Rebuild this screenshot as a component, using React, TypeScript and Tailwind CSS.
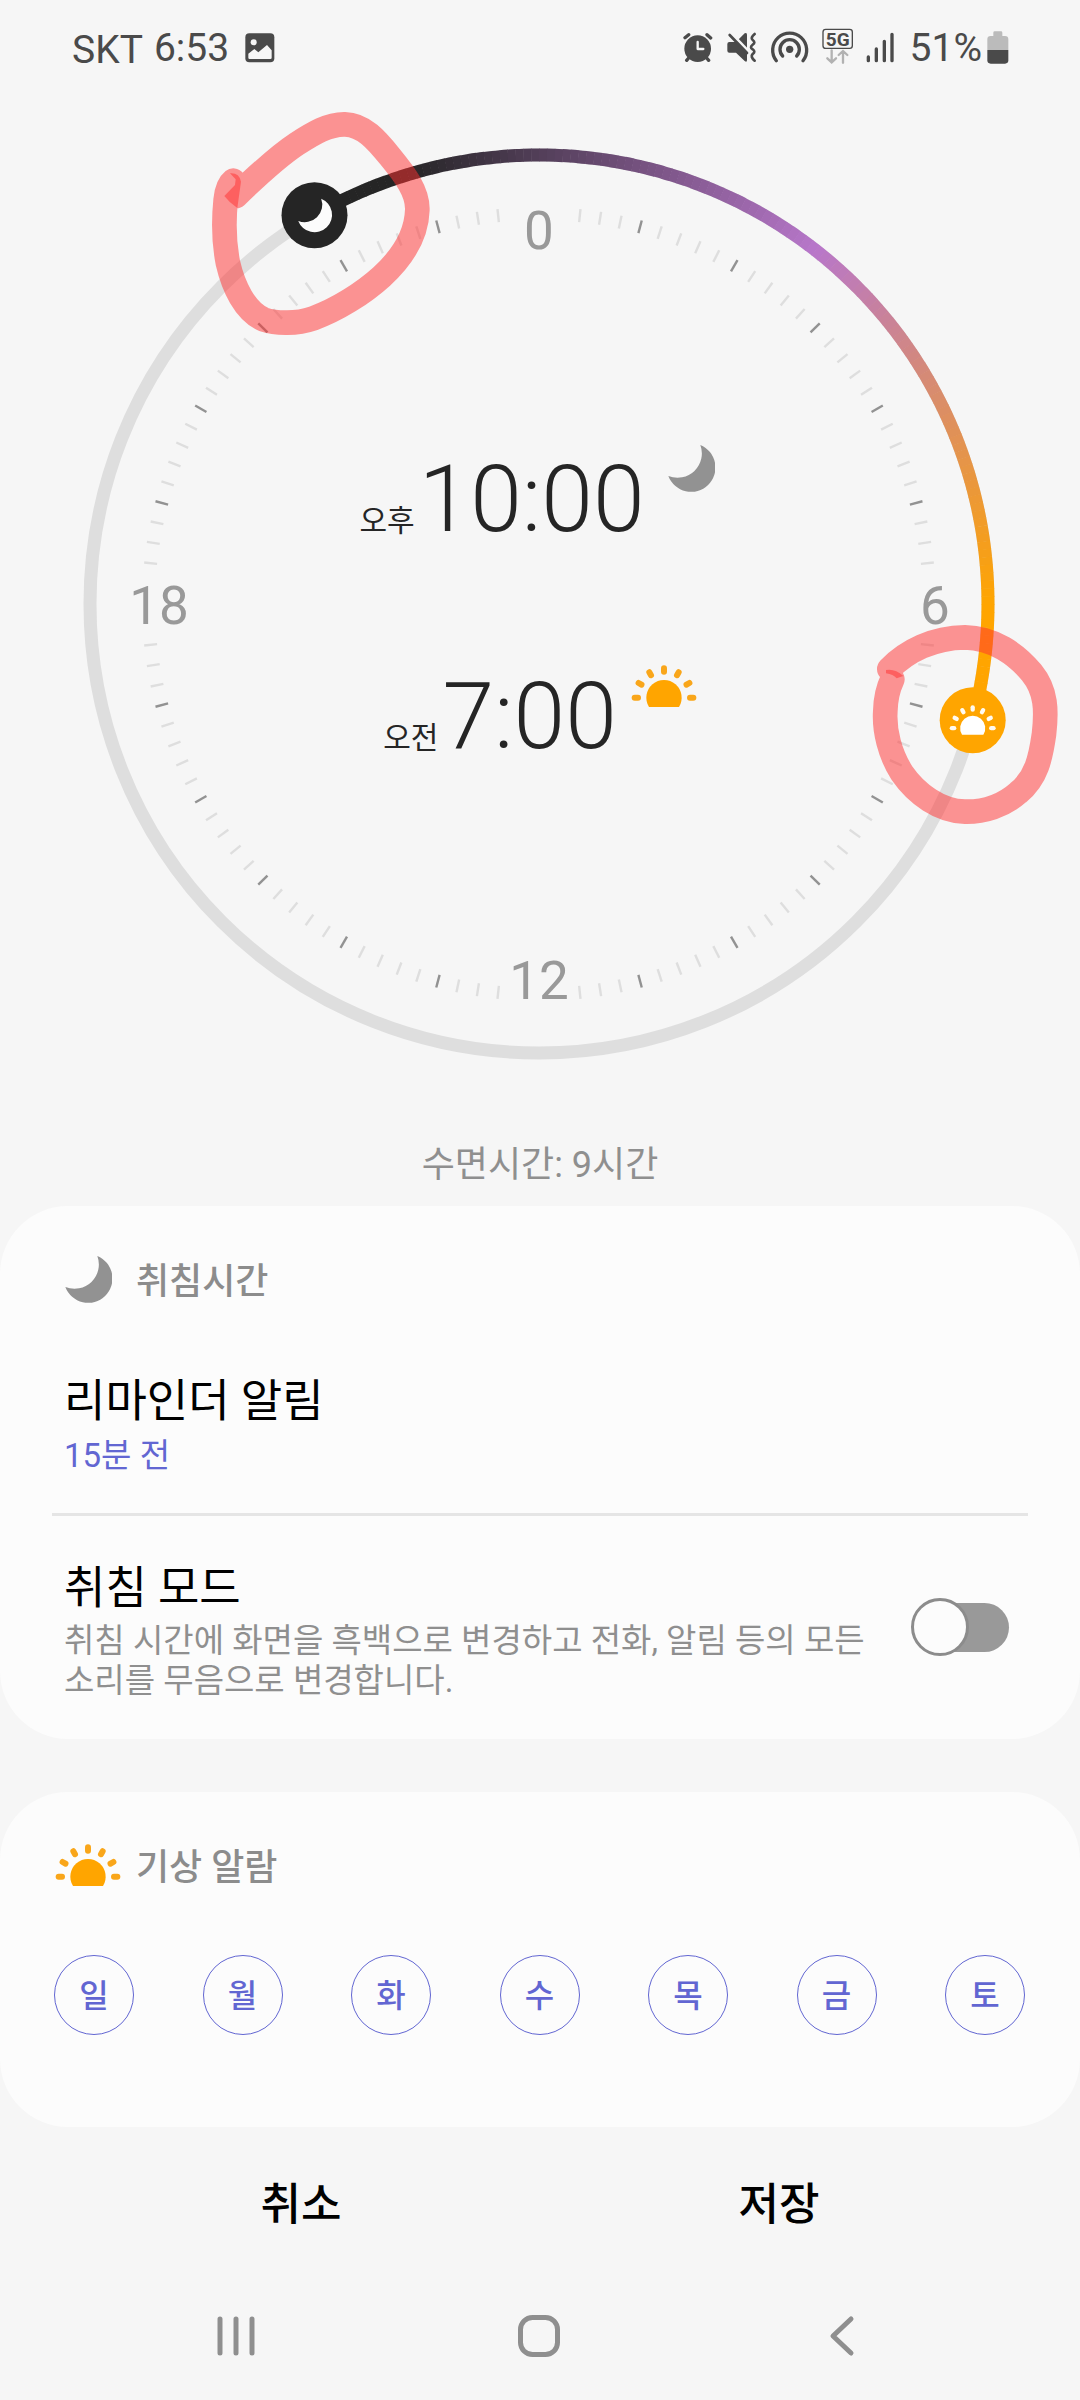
import type { ReactNode } from "react"

const RING_RADIUS = 449
const START_ANGLE = -30
const END_ANGLE = 105

const days = ["일", "월", "화", "수", "목", "금", "토"]

const hourLabels = [
  { text: "0", x: 0, y: -355 },
  { text: "6", x: 396, y: 20 },
  { text: "12", x: 0, y: 395 },
  { text: "18", x: -380, y: 20 },
]

const arcStops = [
  { angle: -30, color: [37, 37, 37] },
  { angle: -17, color: [37, 37, 37] },
  { angle: 38, color: [184, 119, 202] },
  { angle: 90, color: [255, 165, 0] },
  { angle: 105, color: [255, 165, 0] },
]

// 0 degrees is midnight at the top, going clockwise
function point(angle: number, radius: number) {
  const rad = (angle * Math.PI) / 180
  return { x: Math.sin(rad) * radius, y: -Math.cos(rad) * radius }
}

function arcColor(angle: number) {
  const i = Math.max(1, arcStops.findIndex((stop) => angle <= stop.angle))
  const from = arcStops[i - 1]
  const to = arcStops[i]
  const t = (angle - from.angle) / (to.angle - from.angle)
  return `rgb(${from.color.map((c, k) => Math.round(c + (to.color[k] - c) * t)).join(",")})`
}

function MoonShape({ fill }: { fill: string }) {
  return <path d="M28 -69A73 73 0 1 1 -68 24A73 73 0 0 0 28 -69Z" fill={fill} />
}

function SunShape({ body, rays }: { body: string; rays: string }) {
  return (
    <>
      <path d="M-45 28A53 53 0 1 1 45 28Z" fill={body} />
      {[-90, -60, -30, 0, 30, 60, 90].map((angle) => (
        <line
          key={angle}
          y1={-78}
          y2={-88}
          stroke={rays}
          strokeWidth={18}
          strokeLinecap="round"
          transform={`rotate(${angle})`}
        />
      ))}
    </>
  )
}

function MoonIcon({ className = "" }: { className?: string }) {
  return (
    <svg viewBox="-72 -72 144 144" className={`w-12 h-12 ${className}`} aria-hidden="true">
      <MoonShape fill="#929292" />
    </svg>
  )
}

function SunIcon({ className = "" }: { className?: string }) {
  return (
    <svg viewBox="-99 -98 198 129" className={`w-[66px] h-[43px] ${className}`} aria-hidden="true">
      <SunShape body="#ffa500" rays="#f9a61a" />
    </svg>
  )
}

function StatusBar() {
  return (
    <header className="flex items-center h-24 pl-[72px] pr-[71px] pb-1 text-[39px] text-[#4a4a4a]">
      <span className="pt-2">SKT</span>
      <span className="ml-[11px] pt-1">6:53</span>
      <svg viewBox="0 0 90 90" className="ml-4 w-[30px] h-[30px] mt-1" aria-hidden="true">
        <rect x="1" y="1" width="87" height="87" rx="12" fill="#4a4a4a" />
        <circle cx="26" cy="28" r="9" fill="#f6f6f6" />
        <path d="M10 62L28 48L40 58L66 36L80 52V74Q80 78 76 78H14Q10 78 10 74Z" fill="#f6f6f6" />
      </svg>

      <div className="flex items-center gap-[13px] ml-auto">
        <svg viewBox="62 54 90 108" className="w-[30px] h-9" aria-hidden="true">
          <g stroke="#4a4a4a" strokeWidth="10" strokeLinecap="round" fill="none">
            <path d="M68 83L79 74M134 74L145 84M79 144L73 151M133 144L139 151" />
          </g>
          <circle cx="106" cy="116" r="40" fill="#4a4a4a" />
          <path d="M106 96V117H123" stroke="#f6f6f6" strokeWidth="7" strokeLinecap="round" strokeLinejoin="round" fill="none" />
        </svg>
        <svg viewBox="196 54 93 108" className="w-[31px] h-9" aria-hidden="true">
          <path d="M206 96H226L252 70Q259 66 259 74V150Q259 158 252 153L226 128H206Q200 128 200 122V102Q200 96 206 96Z" fill="#4a4a4a" />
          <path d="M206 64L266 127" stroke="#f6f6f6" strokeWidth="9" />
          <path d="M207 75L259 129" stroke="#4a4a4a" strokeWidth="8" strokeLinecap="round" />
          <path d="M282 72Q268 84 276 90Q286 98 276 104Q266 112 276 118Q286 126 276 132Q268 140 282 152" stroke="#4a4a4a" strokeWidth="8" strokeLinecap="round" fill="none" />
        </svg>
        <svg viewBox="327 54 117 108" className="w-[39px] h-9" aria-hidden="true">
          <circle cx="386" cy="118" r="11" fill="#4a4a4a" />
          <g stroke="#4a4a4a" strokeWidth="10" strokeLinecap="round" fill="none">
            <path d="M365 138A29 29 0 1 1 407 138" />
            <path d="M346 152A51 51 0 1 1 426 152" />
          </g>
        </svg>
        <svg viewBox="487 54 93 108" className="w-[31px] h-9" aria-hidden="true">
          <rect x="490" y="58" width="88" height="57" rx="8" fill="none" stroke="#4a4a4a" strokeWidth="4" />
          <text x="534" y="107" textAnchor="middle" fontSize="57" fontWeight="700" fill="#4a4a4a">
            5G
          </text>
          <path d="M516 121V156M503 145L516 157L529 145M550 158V124M537 135L550 123L563 135" stroke="#b2b2b2" strokeWidth="7" strokeLinecap="round" fill="none" />
        </svg>
        <svg viewBox="617 54 87 108" className="w-[29px] h-9" aria-hidden="true">
          <path d="M624 141V152M648 117V152M672 94V152M695 73V152" stroke="#4a4a4a" strokeWidth="10" strokeLinecap="round" />
        </svg>
        <span className="ml-[2px] pt-1">51%</span>
        <svg viewBox="980 54 66 108" className="-ml-2 w-[22px] h-9" aria-hidden="true">
          <path d="M981 120V88Q981 78 991 78H999V68Q999 64 1003 64H1022Q1026 64 1026 68V78H1034Q1044 78 1044 88V120Z" fill="#bbbbbb" />
          <path d="M981 120H1044V151Q1044 161 1034 161H991Q981 161 981 151Z" fill="#4a4a4a" />
        </svg>
      </div>
    </header>
  )
}

function DialFace() {
  const ticks = Array.from({ length: 120 }, (_, i) => i * 3).filter((angle) => {
    const rest = angle % 90
    return rest > 3 && rest < 87
  })
  const segments = Array.from({ length: END_ANGLE - START_ANGLE }, (_, i) => START_ANGLE + i)
  const bed = point(START_ANGLE, RING_RADIUS)
  const wake = point(END_ANGLE, RING_RADIUS)

  return (
    <svg viewBox="-539 -508 1080 978" className="[grid-area:1/1] w-full h-auto" aria-hidden="true">
      <circle r={RING_RADIUS} fill="none" stroke="#dedede" strokeWidth={13} />

      {segments.map((angle) => {
        const a = point(angle, RING_RADIUS)
        const b = point(Math.min(angle + 1.06, END_ANGLE), RING_RADIUS)
        return (
          <path
            key={angle}
            d={`M${a.x} ${a.y}A${RING_RADIUS} ${RING_RADIUS} 0 0 1 ${b.x} ${b.y}`}
            stroke={arcColor(angle + 0.5)}
            strokeWidth={13}
            fill="none"
          />
        )
      })}

      {ticks.map((angle) => (
        <line
          key={angle}
          y1={-397}
          y2={-384}
          stroke={angle % 15 === 0 ? "#929292" : "#dedede"}
          strokeWidth={2.4}
          transform={`rotate(${angle})`}
        />
      ))}

      {hourLabels.map((label) => (
        <text key={label.text} x={label.x} y={label.y} textAnchor="middle" fontSize={53} fill="#999999">
          {label.text}
        </text>
      ))}

      <g transform={`translate(${bed.x} ${bed.y})`}>
        <circle r={33} fill="#252525" />
        <g transform="scale(0.239)">
          <MoonShape fill="#fcfcfc" />
        </g>
      </g>
      <g transform={`translate(${wake.x} ${wake.y})`}>
        <circle r={33} fill="#ffa500" />
        <g transform="translate(0 8) scale(0.237)">
          <SunShape body="#ffffff" rays="#fffaf0" />
        </g>
      </g>

      {/* hand-drawn marker rings around both handles */}
      <g fill="none" stroke="#ff3232" strokeOpacity="0.51" strokeWidth="74" strokeLinecap="round" strokeLinejoin="round">
        <g transform="translate(-349 -514) scale(0.3333)">
          <path d="M138 318C190 268 255 205 320 162C370 130 415 102 465 103C520 104 560 150 600 200C645 255 684 305 682 360C680 430 640 500 575 560C520 610 440 660 370 685C320 702 260 702 220 688C165 663 130 590 114 520C100 450 101 390 107 330C110 300 120 280 130 272" />
          <path d="M103 318L135 285L137 268L120 250Q148 248 153 275L142 354Q118 338 103 318Z" stroke="none" fill="#ff3232" fillOpacity="0.51" />
        </g>
        <g transform="translate(311 -43) scale(0.3333)">
          <path d="M118 324C170 270 250 230 345 229C430 230 500 280 545 335C590 390 590 450 582 520C572 590 560 650 505 695C460 735 400 753 345 752C270 750 200 700 155 635C120 580 102 510 106 450C107 410 115 380 127 355" />
          <path d="M108 327Q135 322 160 345L140 352Q130 340 108 337Z" stroke="none" fill="#ff3232" fillOpacity="0.51" />
        </g>
      </g>
    </svg>
  )
}

function TimeRow({ period, time, children }: { period: string; time: string; children: ReactNode }) {
  return (
    <div className="flex items-baseline justify-center leading-[112px] text-[#252525]">
      <span className="mr-1 text-[30px]">{period}</span>
      <span className="text-[93px] font-light">{time}</span>
      {children}
    </div>
  )
}

function CardHeader({ icon, title }: { icon: ReactNode; title: string }) {
  return (
    <div className="flex items-center gap-[15px] h-12 pl-[55px]">
      <span className="flex justify-center w-[66px]">{icon}</span>
      <h2 className="pt-[5px] text-[36px] font-medium text-[#8c8c8c]">{title}</h2>
    </div>
  )
}

export default function App() {
  return (
    <div className="min-h-screen bg-[#f6f6f6] text-black font-[Roboto,'Noto_Sans_CJK_KR',sans-serif]">
      <StatusBar />

      <main>
        <section className="grid items-center">
          <DialFace />
          <div className="[grid-area:1/1] flex flex-col gap-[84px] pt-[68px]">
            <TimeRow period="오후" time="10:00">
              <MoonIcon className="self-start ml-[22px] mr-[6px]" />
            </TimeRow>
            <TimeRow period="오전" time="7:00">
              <SunIcon className="self-start mt-1 ml-[14px]" />
            </TimeRow>
          </div>
        </section>

        <p className="mt-[67px] mb-[17px] text-center text-[36px] leading-[48px] text-[#8f8f8f]">수면시간: 9시간</p>

        <section className="rounded-[68px] bg-[#fcfcfc] pt-[49px] pb-[38px]">
          <CardHeader icon={<MoonIcon />} title="취침시간" />
          <button className="block w-full mt-[69px] px-16 text-left">
            <span className="block text-[45px] leading-[60px]">리마인더 알림</span>
            <span className="block text-[33px] leading-[48px] text-[#6266d2]">15분 전</span>
          </button>

          <hr className="mx-[52px] mt-[33px] h-[3px] border-0 bg-[#e5e5e5]" />

          <label className="flex items-center justify-between gap-8 mt-10 pl-16 pr-[71px]">
            <span className="flex-1 pt-[3px]">
              <span className="block text-[45px] leading-[60px]">취침 모드</span>
              <span className="block mt-[2px] text-[33px] leading-10 break-keep text-[#8f8f8f]">
                취침 시간에 화면을 흑백으로 변경하고 전화, 알림 등의 모든 소리를 무음으로 변경합니다.
              </span>
            </span>
            <input type="checkbox" role="switch" className="sr-only" />
            <span className="grid items-center w-[98px] pb-[3px]">
              <span className="[grid-area:1/1] ml-3 h-[49px] rounded-full bg-[#999999]" />
              <span className="[grid-area:1/1] w-[58px] h-[58px] rounded-full border-3 border-[#8c8c8c] bg-[#fcfcfc]" />
            </span>
          </label>
        </section>

        <section className="mt-[53px] rounded-[68px] bg-[#fcfcfc] pt-[49px] pb-[92px]">
          <CardHeader icon={<SunIcon />} title="기상 알람" />
          <div className="flex justify-between mt-[66px] pl-[54px] pr-[55px]">
            {days.map((day) => (
              <button
                key={day}
                className="w-20 h-20 pt-[2px] rounded-full border border-[#6266d2] text-[32px] font-medium text-[#6266d2]"
              >
                {day}
              </button>
            ))}
          </div>
        </section>
      </main>

      <div className="grid grid-cols-2 mt-12 px-[62px] text-[44px] leading-[60px] font-medium">
        <button>취소</button>
        <button>저장</button>
      </div>

      <nav className="grid grid-cols-3 justify-items-center mt-20 pl-[85px] pr-[87px] pb-[39px]">
        <button aria-label="최근 앱">
          <svg viewBox="0 0 42 42" className="w-[42px] h-[42px]" fill="none" stroke="#8f8f8f" strokeWidth="5" strokeLinecap="round">
            <path d="M5 4V38M21 4V38M37 4V38" />
          </svg>
        </button>
        <button aria-label="홈">
          <svg viewBox="0 0 42 42" className="w-[42px] h-[42px]" fill="none" stroke="#8f8f8f" strokeWidth="5">
            <rect x="2.5" y="2.5" width="37" height="37" rx="12" />
          </svg>
        </button>
        <button aria-label="뒤로">
          <svg viewBox="0 0 42 42" className="w-[42px] h-[42px]" fill="none" stroke="#8f8f8f" strokeWidth="5" strokeLinecap="round" strokeLinejoin="round">
            <path d="M30 4L12 21L30 38" />
          </svg>
        </button>
      </nav>
    </div>
  )
}
